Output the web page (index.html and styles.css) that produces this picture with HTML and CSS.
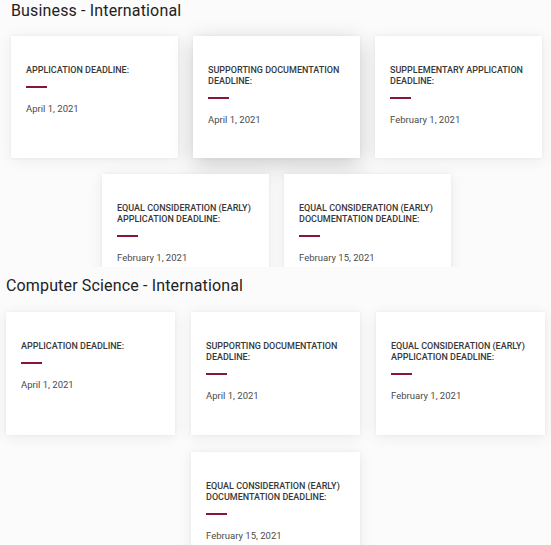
FILE: index.html
```html
<!DOCTYPE html>
<html>
<head>
<meta charset="utf-8">
<link rel="stylesheet" href="styles.css">
</head>
<body>
<section class="program program-one">
  <h2 class="program-title">Business - International</h2>
  <div class="cards">
    <div class="card">
      <div class="label">Application deadline:</div>
      <div class="bar"></div>
      <div class="date">April 1, 2021</div>
    </div>
    <div class="card card-hover">
      <div class="label">Supporting documentation deadline:</div>
      <div class="bar"></div>
      <div class="date">April 1, 2021</div>
    </div>
    <div class="card">
      <div class="label">Supplementary application deadline:</div>
      <div class="bar"></div>
      <div class="date">February 1, 2021</div>
    </div>
    <div class="card">
      <div class="label">Equal consideration (early) application deadline:</div>
      <div class="bar"></div>
      <div class="date">February 1, 2021</div>
    </div>
    <div class="card">
      <div class="label">Equal consideration (early) documentation deadline:</div>
      <div class="bar"></div>
      <div class="date">February 15, 2021</div>
    </div>
  </div>
</section>
<section class="program program-two">
  <h2 class="program-title">Computer Science - International</h2>
  <div class="cards">
    <div class="card">
      <div class="label">Application deadline:</div>
      <div class="bar"></div>
      <div class="date">April 1, 2021</div>
    </div>
    <div class="card">
      <div class="label">Supporting documentation deadline:</div>
      <div class="bar"></div>
      <div class="date">April 1, 2021</div>
    </div>
    <div class="card">
      <div class="label">Equal consideration (early) application deadline:</div>
      <div class="bar"></div>
      <div class="date">February 1, 2021</div>
    </div>
    <div class="card">
      <div class="label">Equal consideration (early) documentation deadline:</div>
      <div class="bar"></div>
      <div class="date">February 15, 2021</div>
    </div>
  </div>
</section>
</body>
</html>
```
FILE: styles.css
```css
html, body {
  margin: 0;
  padding: 0;
  background: #ffffff;
  font-family: Roboto, "Liberation Sans", sans-serif;
}

.program {
  box-sizing: border-box;
  overflow: hidden;
}

.program-one {
  height: 267px;
  padding: 0 9px 0 11px;
  background: #fbfbfc;
}

.program-two {
  height: 278px;
  padding: 0 6px 0 6px;
  background: #fbfbfc;
}

.program-title {
  margin: 0;
  font-size: 16px;
  font-weight: 400;
  letter-spacing: 0.15px;
  color: #222222;
  line-height: 22px;
}

.program-one .program-title {
  padding-top: 0;
  height: 36px;
}

.program-two .program-title {
  padding-top: 8px;
  height: 37px;
}

.cards {
  display: flex;
  flex-wrap: wrap;
  justify-content: center;
  column-gap: 15px;
  row-gap: 16px;
}

.program-two .cards {
  column-gap: 16px;
  row-gap: 17px;
}

.card {
  box-sizing: border-box;
  width: 167px;
  height: 122px;
  padding: 29px 8px 0 15px;
  background: #ffffff;
  box-shadow: 0 2px 14px rgba(0, 0, 0, 0.07), 0 0 3px rgba(0, 0, 0, 0.05);
}

.program-two .card {
  width: 169px;
  height: 123px;
}

.card-hover {
  box-shadow: 0 6px 22px rgba(0, 0, 0, 0.2), 0 0 3px rgba(0, 0, 0, 0.05);
}

.label {
  font-size: 9px;
  line-height: 11px;
  font-weight: 500;
  text-transform: uppercase;
  letter-spacing: 0;
  color: #383838;
}

.bar {
  width: 21px;
  height: 2px;
  margin-top: 10px;
  background: #85163f;
}

.date {
  margin-top: 15px;
  font-size: 9.5px;
  line-height: 12px;
  color: #4a4a4a;
}
```
